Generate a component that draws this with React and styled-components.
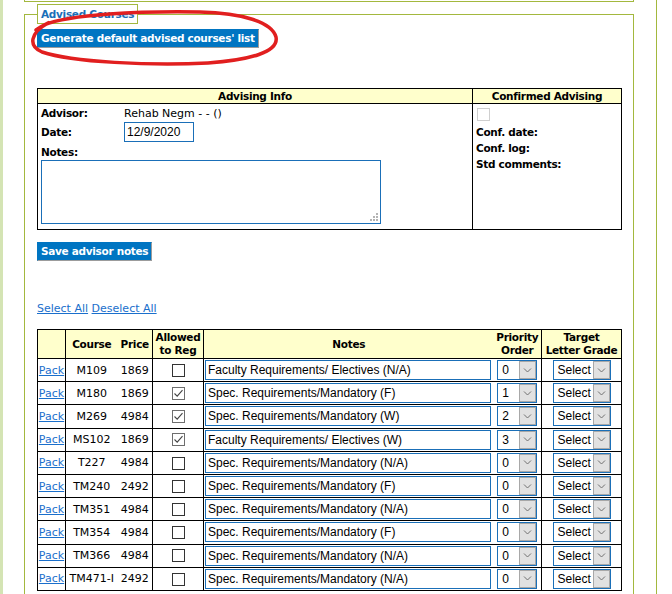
import styled, { createGlobalStyle, css } from "styled-components";

const GlobalStyle = createGlobalStyle`
	body {
		margin: 0;
		background: #fff;
		color: #000;
		font-family: "DejaVu Sans", Verdana, sans-serif;
		font-size: 11px;
	}
`;

const green = "#a3b83e";
const blue = "#1a6fb8";

// DejaVu bold runs wider than the original Verdana, so it's squeezed a bit
const boldText = css`
	font-weight: bold;
	font-size: 10.5px;
	letter-spacing: -0.3px;
`;

const courses = [
	{ code: "M109", price: 1869, allowed: false, note: "Faculty Requirements/ Electives (N/A)", order: 0 },
	{ code: "M180", price: 1869, allowed: true, note: "Spec. Requirements/Mandatory (F)", order: 1 },
	{ code: "M269", price: 4984, allowed: true, note: "Spec. Requirements/Mandatory (W)", order: 2 },
	{ code: "MS102", price: 1869, allowed: true, note: "Faculty Requirements/ Electives (W)", order: 3 },
	{ code: "T227", price: 4984, allowed: false, note: "Spec. Requirements/Mandatory (N/A)", order: 0 },
	{ code: "TM240", price: 2492, allowed: false, note: "Spec. Requirements/Mandatory (F)", order: 0 },
	{ code: "TM351", price: 4984, allowed: false, note: "Spec. Requirements/Mandatory (N/A)", order: 0 },
	{ code: "TM354", price: 4984, allowed: false, note: "Spec. Requirements/Mandatory (F)", order: 0 },
	{ code: "TM366", price: 4984, allowed: false, note: "Spec. Requirements/Mandatory (N/A)", order: 0 },
	{ code: "TM471-I", price: 2492, allowed: false, note: "Spec. Requirements/Mandatory (N/A)", order: 0 },
];

function Checkbox({ checked, disabled }) {
	return (
		<Box $checked={checked} $disabled={disabled}>
			{checked && (
				<svg width="11" height="11" viewBox="0 0 11 11">
					<path d="M1.5 5.5 L4.2 8.2 L9.5 2.2" fill="none" stroke="#444" strokeWidth="1.1" />
				</svg>
			)}
		</Box>
	);
}

function FakeSelect({ value, width }) {
	return (
		<SelectBox $width={width}>
			<SelectValue>{value}</SelectValue>
			<SelectButton>
				<svg width="9" height="5" viewBox="0 0 9 5">
					<path d="M1 0.5 L4.5 4 L8 0.5" fill="none" stroke="#707070" strokeWidth="1" />
				</svg>
			</SelectButton>
		</SelectBox>
	);
}

export default function App() {
	return (
		<Page>
			<GlobalStyle />
			<Strip />
			<Main>
				<PrevPanel />
				<Fieldset>
					<Legend>Advised Courses</Legend>
					<BlueButton>Generate default advised courses' list</BlueButton>

					<InfoTable>
						<colgroup>
							<col style={{ width: 435 }} />
							<col style={{ width: 149 }} />
						</colgroup>
						<thead>
							<tr>
								<InfoHead>Advising Info</InfoHead>
								<InfoHead>Confirmed Advising</InfoHead>
							</tr>
						</thead>
						<tbody>
							<tr>
								<InfoCell>
									<InfoGrid>
										<Label>Advisor:</Label>
										<span>Rehab Negm - - ()</span>
										<Label>Date:</Label>
										<DateInput defaultValue="12/9/2020" />
										<NotesLabel>Notes:</NotesLabel>
									</InfoGrid>
									<NotesWrap>
										<NotesArea />
										<Grip width="8" height="8" viewBox="0 0 8 8">
											<g fill="#b4b4b4">
												<rect x="6" y="0" width="2" height="2" />
												<rect x="3" y="3" width="2" height="2" />
												<rect x="6" y="3" width="2" height="2" />
												<rect x="0" y="6" width="2" height="2" />
												<rect x="3" y="6" width="2" height="2" />
												<rect x="6" y="6" width="2" height="2" />
											</g>
										</Grip>
									</NotesWrap>
								</InfoCell>
								<ConfirmCell>
									<ConfirmBox>
										<Checkbox disabled />
									</ConfirmBox>
									<Label>Conf. date:</Label>
									<Label>Conf. log:</Label>
									<Label>Std comments:</Label>
								</ConfirmCell>
							</tr>
						</tbody>
					</InfoTable>

					<SaveButton>Save advisor notes</SaveButton>

					<LinkRow>
						<TextLink href="#">Select All</TextLink> <TextLink href="#">Deselect All</TextLink>
					</LinkRow>

					<CourseTable>
						<colgroup>
							<col style={{ width: 28 }} />
							<col style={{ width: 52 }} />
							<col style={{ width: 35 }} />
							<col style={{ width: 51 }} />
							<col style={{ width: 290 }} />
							<col style={{ width: 48 }} />
							<col style={{ width: 80 }} />
						</colgroup>
						<thead>
							<tr>
								<HeadCell />
								<HeadCell $open="right">Course</HeadCell>
								<HeadCell $open="left">Price</HeadCell>
								<HeadCell>
									Allowed
									<br />
									to Reg
								</HeadCell>
								<HeadCell $open="right">Notes</HeadCell>
								<HeadCell $open="left">
									Priority
									<br />
									Order
								</HeadCell>
								<HeadCell>
									Target
									<br />
									Letter Grade
								</HeadCell>
							</tr>
						</thead>
						<tbody>
							{courses.map((c) => (
								<tr key={c.code}>
									<Cell>
										<TextLink href="#">Pack</TextLink>
									</Cell>
									<Cell $open="right">{c.code}</Cell>
									<Cell $open="left">{c.price}</Cell>
									<Cell>
										<Checkbox checked={c.allowed} />
									</Cell>
									<Cell $open="right" $align="left">
										<NoteInput defaultValue={c.note} />
									</Cell>
									<Cell $open="left">
										<FakeSelect value={c.order} width={40} />
									</Cell>
									<Cell>
										<FakeSelect value="Select" width={58} />
									</Cell>
								</tr>
							))}
						</tbody>
					</CourseTable>
				</Fieldset>
			</Main>

			<Scribble width="300" height="80" viewBox="0 0 300 80">
				<path
					d="M44 25 C 70 14, 140 11, 200 12 C 242 13, 272 22, 276 37 C 279 52, 250 60, 208 63 C 150 66, 72 62, 42 52 C 28 46, 30 33, 48 23 C 52 21, 40 27, 36 30"
					fill="none"
					stroke="#e11f1f"
					strokeWidth="3.5"
					strokeLinecap="round"
				/>
			</Scribble>
		</Page>
	);
}

const Page = styled.div`
	position: relative;
	display: flex;
	min-height: 594px;
	overflow: hidden;
`;

const Strip = styled.div`
	flex: none;
	width: 3px;
	background: #d4e4b4;
`;

const Main = styled.div`
	flex: none;
	margin-left: 21px;
	width: 610px;
	padding-right: 22px;
	border-right: 1px solid ${green};
`;

const PrevPanel = styled.div`
	height: 1px;
	border: 1px solid ${green};
	border-top: none;
`;

const Fieldset = styled.fieldset`
	margin: 2px 0 0;
	padding: 5px 12px 30px;
	min-width: 0;
	border: 1px solid ${green};
	border-bottom: none;
`;

const Legend = styled.legend`
	${boldText}
	padding: 0 3px;
	border: 1px solid ${green};
	color: ${blue};
	line-height: 18px;
`;

const BlueButton = styled.button`
	display: block;
	height: 19px;
	padding: 0 3px;
	font-family: "DejaVu Sans", Verdana, sans-serif;
	${boldText}
	line-height: 17px;
	color: #fff;
	background: #0075c2;
	border: 1px solid #0075c2;
	border-right-color: #9c9c9c;
	border-bottom-color: #9c9c9c;
`;

const SaveButton = styled(BlueButton)`
	margin-top: 12px;
`;

const InfoTable = styled.table`
	margin-top: 40px;
	width: 584px;
	table-layout: fixed;
	border-collapse: collapse;
	border: 1px solid #000;
`;

const InfoHead = styled.th`
	${boldText}
	height: 14px;
	padding: 0;
	line-height: 14px;
	background: #ffffcc;
	border: 1px solid #000;
`;

const InfoCell = styled.td`
	vertical-align: top;
	padding: 0 3px 5px;
	border: 1px solid #000;
`;

const InfoGrid = styled.div`
	display: grid;
	grid-template-columns: 83px auto;
	grid-template-rows: 18px 20px 18px;
	align-items: center;
	justify-items: start;
`;

const Label = styled.div`
	${boldText}
	line-height: 16px;
`;

const NotesLabel = styled(Label)`
	grid-column: 1 / 3;
	align-self: end;
`;

const DateInput = styled.input`
	box-sizing: border-box;
	width: 70px;
	height: 20px;
	padding: 0 2px;
	font: 12px "Liberation Sans", Arial, sans-serif;
	color: #000;
	border: 1px solid ${blue};
	outline: none;
`;

const NotesWrap = styled.div`
	position: relative;
	width: 340px;
	height: 64px;
`;

const NotesArea = styled.textarea`
	display: block;
	box-sizing: border-box;
	width: 100%;
	height: 100%;
	margin: 0;
	resize: none;
	border: 1px solid ${blue};
	outline: none;
`;

const Grip = styled.svg`
	position: absolute;
	right: 3px;
	bottom: 3px;
`;

const ConfirmCell = styled(InfoCell)`
	padding: 3px 3px 5px;
`;

const ConfirmBox = styled.div`
	height: 13px;
	margin: 0 0 4px 1px;
`;

const Box = styled.span`
	display: inline-flex;
	align-items: center;
	justify-content: center;
	box-sizing: border-box;
	width: 13px;
	height: 13px;
	vertical-align: middle;
	background: #fff;
	border: 1px solid ${(p) => (p.$disabled ? "#cfcfcf" : p.$checked ? "#6e6e6e" : "#333")};
`;

const LinkRow = styled.div`
	margin-top: 41px;
	line-height: 14px;
`;

const TextLink = styled.a`
	color: #1a6fcc;
	text-decoration: underline;
`;

const CourseTable = styled.table`
	margin-top: 13px;
	width: 584px;
	table-layout: fixed;
	border-collapse: collapse;
	border: 1px solid #000;
`;

const HeadCell = styled.th`
	${boldText}
	height: 28px;
	padding: 0;
	line-height: 13px;
	text-align: center;
	white-space: nowrap;
	background: #ffffcc;
	border-top: 1px solid #000;
	border-bottom: 1px solid #000;
	border-left: ${(p) => (p.$open === "left" ? "none" : "1px solid #000")};
`;

const Cell = styled.td`
	height: 22.2px;
	padding: ${(p) => (p.$align === "left" ? "0 0 0 1px" : "0")};
	text-align: ${(p) => p.$align || "center"};
	white-space: nowrap;
	vertical-align: middle;
	border-top: 1px solid #000;
	border-bottom: 1px solid #000;
	border-left: ${(p) => (p.$open === "left" ? "none" : "1px solid #000")};
`;

const NoteInput = styled.input`
	display: block;
	box-sizing: border-box;
	width: 286px;
	height: 20px;
	margin: 0;
	padding: 0 2px;
	font: 12px "Liberation Sans", Arial, sans-serif;
	color: #000;
	border: 1px solid ${blue};
	outline: none;
`;

const SelectBox = styled.div`
	display: inline-flex;
	box-sizing: border-box;
	width: ${(p) => p.$width}px;
	height: 20px;
	vertical-align: middle;
	background: #fff;
	border: 1px solid ${blue};
`;

const SelectValue = styled.span`
	flex: 1;
	padding-left: 4px;
	font: 12px "Liberation Sans", Arial, sans-serif;
	line-height: 18px;
	text-align: left;
`;

const SelectButton = styled.span`
	display: flex;
	align-items: center;
	justify-content: center;
	box-sizing: border-box;
	width: 17px;
	background: #e1e1e1;
	border: 1px solid #a8a8a8;
`;

const Scribble = styled.svg`
	position: absolute;
	left: 0;
	top: 0;
	pointer-events: none;
`;
